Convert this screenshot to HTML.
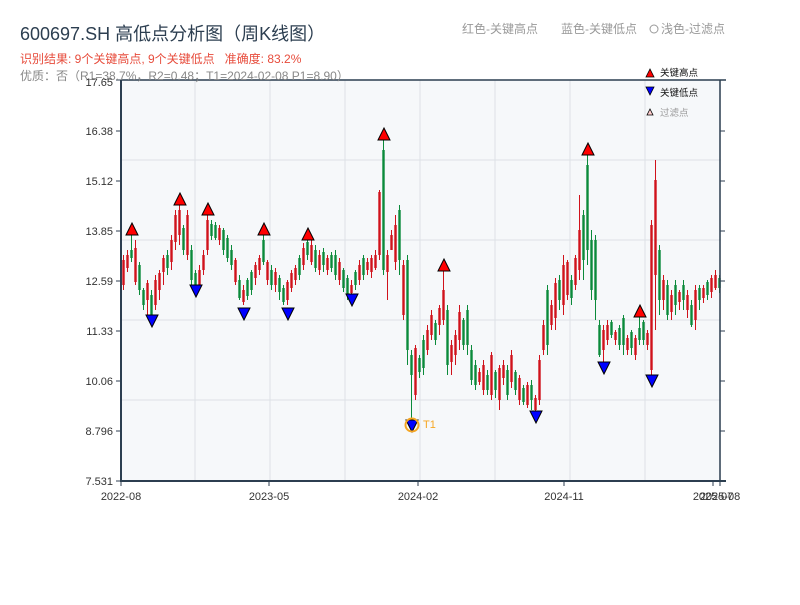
<!DOCTYPE html>
<html><head><meta charset="utf-8"><style>
body{margin:0;background:#fff;width:800px;height:600px;overflow:hidden;font-family:"Liberation Sans","Noto Sans CJK SC",sans-serif}
</style></head><body>
<svg width="800" height="600" xmlns="http://www.w3.org/2000/svg" font-family="Liberation Sans, Noto Sans CJK SC, sans-serif">
<rect width="800" height="600" fill="#fff"/>
<rect x="121" y="80" width="600" height="401" fill="#f6f8fa"/>
<g stroke="#dde1e6" stroke-width="1">
<line x1="121" y1="160" x2="721" y2="160"/><line x1="121" y1="240" x2="721" y2="240"/><line x1="121" y1="320" x2="721" y2="320"/><line x1="121" y1="400" x2="721" y2="400"/>
<line x1="195" y1="80" x2="195" y2="481"/><line x1="270" y1="80" x2="270" y2="481"/><line x1="345" y1="80" x2="345" y2="481"/><line x1="420" y1="80" x2="420" y2="481"/><line x1="495" y1="80" x2="495" y2="481"/><line x1="570" y1="80" x2="570" y2="481"/><line x1="645" y1="80" x2="645" y2="481"/>
</g>
<!-- red candles -->
<path fill="none" stroke="#d0121b" stroke-width="1" d="M123.5 255V290M127.5 250V272M135.5 240V285M147.5 280V315M155.5 275V310M159.5 270V300M163.5 255V285M171.5 235V270M175.5 210V250M179.5 205V245M187.5 210V260M199.5 265V290M203.5 250V275M207.5 215V255M219.5 225V245M235.5 258V285M243.5 285V305M255.5 262V285M259.5 255V275M267.5 260V285M275.5 268V292M287.5 280V305M291.5 270V292M295.5 265V285M303.5 243V270M311.5 240V265M319.5 250V275M327.5 255V275M339.5 258V285M351.5 280V297M359.5 260V285M367.5 258V275M371.5 255V278M375.5 250V270M379.5 190V260M387.5 250V300M391.5 230V250M395.5 215V270M403.5 260V320M415.5 345V400M427.5 325V355M431.5 310V340M439.5 305V335M443.5 270V325M451.5 340V375M455.5 330V365M459.5 305V350M479.5 368V385M483.5 360V395M491.5 352V400M499.5 365V410M503.5 360V385M511.5 350V388M519.5 375V405M527.5 382V408M535.5 395V415M539.5 355V405M543.5 320V355M551.5 300V330M555.5 278V330M563.5 255V315M567.5 260V300M575.5 255V290M579.5 195V280M603.5 325V362M607.5 320V345M615.5 330V345M627.5 335V355M635.5 335V360M647.5 330V350M651.5 220V375M655.5 160V330M663.5 275V310M671.5 290V320M679.5 290V310M687.5 290V318M695.5 285V330M703.5 285V303M711.5 275V298M715.5 270V290"/>
<path fill="none" stroke="#d0121b" stroke-width="2.4" d="M123.5 260V285M127.5 255V268M135.5 248V282M147.5 283V300M155.5 280V305M159.5 273V290M163.5 258V272M171.5 240V262M175.5 215V242M179.5 210V235M187.5 215V255M199.5 270V285M203.5 255V270M207.5 220V250M219.5 228V240M235.5 260V282M243.5 290V302M255.5 265V278M259.5 258V270M267.5 262V280M275.5 272V285M287.5 282V300M291.5 273V288M295.5 268V280M303.5 248V265M311.5 245V262M319.5 255V270M327.5 258V270M339.5 262V280M351.5 285V293M359.5 265V280M367.5 262V270M371.5 258V272M375.5 255V268M379.5 192V255M387.5 255V272M391.5 235V250M395.5 225V262M403.5 265V315M415.5 348V395M427.5 330V350M431.5 315V335M439.5 308V325M443.5 290V320M451.5 345V362M455.5 335V355M459.5 312V340M479.5 372V382M483.5 365V390M491.5 355V395M499.5 368V400M503.5 365V378M511.5 355V382M519.5 378V400M527.5 385V405M535.5 398V410M539.5 360V400M543.5 325V350M551.5 305V325M555.5 283V318M563.5 265V305M567.5 262V295M575.5 258V285M579.5 230V270M603.5 330V350M607.5 325V340M615.5 332V340M627.5 338V350M635.5 338V355M647.5 333V345M651.5 225V370M655.5 180V275M663.5 280V300M671.5 295V312M679.5 292V302M687.5 295V310M695.5 290V320M703.5 288V298M711.5 278V292M715.5 275V288"/>
<!-- green candles -->
<path fill="none" stroke="#0a8a3a" stroke-width="1" d="M131.5 234V262M139.5 262V295M143.5 288V310M151.5 290V325M167.5 250V275M183.5 225V255M191.5 245V285M195.5 270V295M211.5 220V240M215.5 222V240M223.5 228V255M227.5 235V262M231.5 245V270M239.5 275V300M247.5 278V300M251.5 270V295M263.5 235V265M271.5 265V290M279.5 275V300M283.5 285V305M299.5 255V280M307.5 238V260M315.5 245V272M323.5 248V272M331.5 252V272M335.5 250V280M343.5 268V292M347.5 275V300M355.5 270V290M363.5 255V280M383.5 140V275M399.5 205V275M407.5 255V365M411.5 350V420M419.5 355V378M423.5 335V375M435.5 320V345M447.5 305V375M463.5 318V350M467.5 305V355M471.5 345V385M475.5 360V390M487.5 370V395M495.5 370V398M507.5 365V400M515.5 370V395M523.5 385V405M531.5 380V410M547.5 285V355M559.5 275V310M571.5 275V305M583.5 210V280M587.5 155V265M591.5 230V300M595.5 235V320M599.5 320V357M611.5 320V338M619.5 325V350M623.5 315V355M631.5 330V355M639.5 317V345M643.5 320V345M659.5 245V315M667.5 280V320M675.5 280V315M683.5 280V310M691.5 300V327M699.5 285V310M707.5 280V300M719.5 275V293"/>
<path fill="none" stroke="#0a8a3a" stroke-width="2.4" d="M131.5 250V258M139.5 265V290M143.5 290V305M151.5 295V315M167.5 255V268M183.5 228V250M191.5 250V280M195.5 273V290M211.5 224V236M215.5 225V238M223.5 230V250M227.5 238V258M231.5 250V265M239.5 280V298M247.5 280V296M251.5 272V290M263.5 240V262M271.5 270V285M279.5 278V292M283.5 288V302M299.5 258V275M307.5 242V255M315.5 250V268M323.5 252V265M331.5 255V268M335.5 255V275M343.5 270V288M347.5 278V295M355.5 272V285M363.5 258V275M383.5 150V270M399.5 210V260M407.5 260V350M411.5 355V375M419.5 358V372M423.5 340V368M435.5 323V340M447.5 310V365M463.5 320V345M467.5 310V345M471.5 350V380M475.5 365V385M487.5 375V390M495.5 372V390M507.5 370V395M515.5 372V390M523.5 388V402M531.5 385V400M547.5 290V345M559.5 280V300M571.5 280V298M583.5 215V260M587.5 165V250M591.5 240V290M595.5 240V300M599.5 325V355M611.5 322V335M619.5 328V345M623.5 318V345M631.5 332V348M639.5 328V340M643.5 322V340M659.5 250V300M667.5 285V315M675.5 285V305M683.5 285V300M691.5 305V325M699.5 288V300M707.5 282V295M719.5 278V288"/>
<g stroke="#2c3e50" fill="none">
<line x1="121" y1="80" x2="726" y2="80" stroke-width="1.5"/>
<line x1="121" y1="80" x2="121" y2="482" stroke-width="2"/>
<line x1="720" y1="80" x2="720" y2="482" stroke-width="1.5"/>
<line x1="120" y1="481" x2="726" y2="481" stroke-width="2"/>
<g stroke-width="1">
<line x1="116" y1="80" x2="121" y2="80"/><line x1="116" y1="131" x2="121" y2="131"/><line x1="116" y1="181" x2="121" y2="181"/><line x1="116" y1="231" x2="121" y2="231"/><line x1="116" y1="281" x2="121" y2="281"/><line x1="116" y1="331" x2="121" y2="331"/><line x1="116" y1="381" x2="121" y2="381"/><line x1="116" y1="431" x2="121" y2="431"/><line x1="116" y1="481" x2="121" y2="481"/>
<line x1="720" y1="80" x2="725" y2="80"/><line x1="720" y1="131" x2="725" y2="131"/><line x1="720" y1="181" x2="725" y2="181"/><line x1="720" y1="231" x2="725" y2="231"/><line x1="720" y1="281" x2="725" y2="281"/><line x1="720" y1="331" x2="725" y2="331"/><line x1="720" y1="381" x2="725" y2="381"/><line x1="720" y1="431" x2="725" y2="431"/>
<line x1="121" y1="481" x2="121" y2="486"/><line x1="269" y1="481" x2="269" y2="486"/><line x1="418" y1="481" x2="418" y2="486"/><line x1="564" y1="481" x2="564" y2="486"/><line x1="713" y1="481" x2="713" y2="486"/><line x1="720" y1="481" x2="720" y2="486"/>
</g></g>
<g font-size="11" fill="#333" text-anchor="end">
<text x="113" y="135">16.38</text><text x="113" y="185">15.12</text><text x="113" y="235">13.85</text><text x="113" y="285">12.59</text><text x="113" y="335">11.33</text><text x="113" y="385">10.06</text><text x="113" y="435">8.796</text><text x="113" y="485">7.531</text>
</g>
<g font-size="11" fill="#333" text-anchor="middle">
<text x="121" y="500">2022-08</text><text x="269" y="500">2023-05</text><text x="418" y="500">2024-02</text><text x="564" y="500">2024-11</text><text x="713" y="500">2025-07</text><text x="720" y="500">2025-08</text>
</g>
<text x="20" y="40" font-size="18" fill="#2c3e50">600697.SH 高低点分析图（周K线图）</text>
<text x="20" y="63" font-size="12" fill="#e74c3c" xml:space="preserve">识别结果: 9个关键高点, 9个关键低点   准确度: 83.2%</text>
<text x="20" y="80" font-size="12" fill="#888">优质：否（R1=38.7%，R2=0.48；T1=2024-02-08 P1=8.90）</text>
<text x="113" y="86" font-size="11" fill="#333" text-anchor="end">17.65</text>
<text x="462" y="33" font-size="12" fill="#999">红色-关键高点</text>
<text x="561" y="33" font-size="12" fill="#999">蓝色-关键低点</text>
<circle cx="654" cy="29" r="4" fill="none" stroke="#999"/>
<text x="661" y="33" font-size="12" fill="#999">浅色-过滤点</text>
<polygon points="646,77 654,77 650,69" fill="red" stroke="#000" stroke-width=".8"/>
<text x="660" y="76" font-size="9.5" fill="#111">关键高点</text>
<polygon points="646,87 654,87 650,95" fill="blue" stroke="#000" stroke-width=".8"/>
<text x="660" y="96" font-size="9.5" fill="#111">关键低点</text>
<polygon points="647,115 653,115 650,109" fill="#fcc" stroke="#000" stroke-width=".8"/>
<text x="660" y="116" font-size="9.5" fill="#999">过滤点</text>
<g fill="red" stroke="#000" stroke-width="1">
<polygon points="126,235 138,235 132,223"/><polygon points="174,205 186,205 180,193"/><polygon points="202,215 214,215 208,203"/><polygon points="258,235 270,235 264,223"/><polygon points="302,240 314,240 308,228"/><polygon points="378,140 390,140 384,128"/><polygon points="438,271 450,271 444,259"/><polygon points="582,155 594,155 588,143"/><polygon points="634,317 646,317 640,305"/>
</g>
<g fill="blue" stroke="#000" stroke-width="1">
<polygon points="146,315 158,315 152,327"/><polygon points="190,285 202,285 196,297"/><polygon points="238,308 250,308 244,320"/><polygon points="282,308 294,308 288,320"/><polygon points="346,294 358,294 352,306"/><polygon points="406,420 418,420 412,432"/><polygon points="530,411 542,411 536,423"/><polygon points="598,362 610,362 604,374"/><polygon points="646,375 658,375 652,387"/>
</g>
<circle cx="412" cy="425" r="6.5" fill="none" stroke="#f5a623" stroke-width="2"/>
<text x="423" y="428" font-size="11" fill="#f5a623">T1</text>
</svg>
</body></html>
